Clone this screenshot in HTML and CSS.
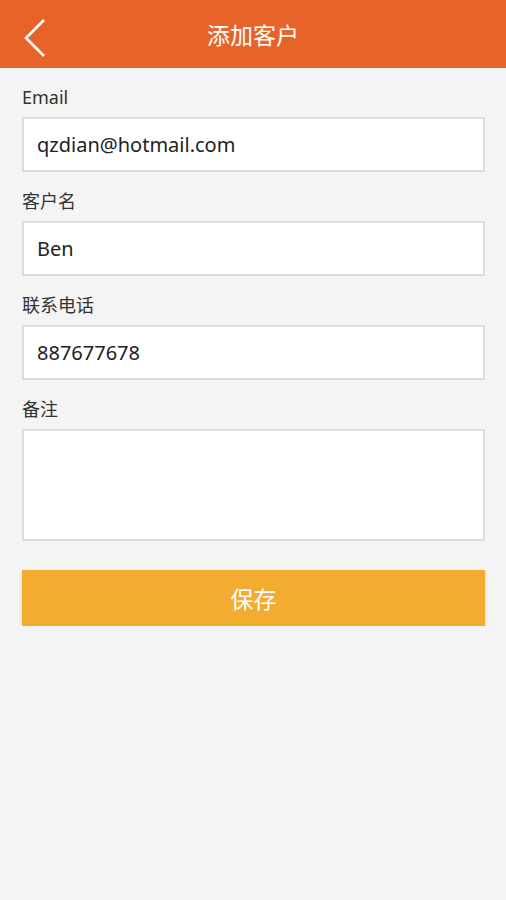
FILE: index.html
```html
<!DOCTYPE html>
<html lang="zh-CN">
<head>
  <meta charset="UTF-8">
  <meta name="viewport" content="width=device-width, initial-scale=1.0">
  <title>添加客户</title>
  <link rel="stylesheet" href="styles.css">
</head>
<body>
  <header class="topbar">
    <a class="back" href="#">
      <svg width="24" height="40" viewBox="0 0 24 40">
        <polyline points="21,2 3,20 21,38" fill="none" stroke="#fff" stroke-width="2.6"/>
      </svg>
    </a>
    <h1>添加客户</h1>
  </header>

  <form class="form">
    <label for="email">Email</label>
    <input type="text" id="email" value="qzdian@hotmail.com">

    <label for="name">客户名</label>
    <input type="text" id="name" value="Ben">

    <label for="phone">联系电话</label>
    <input type="text" id="phone" value="887677678">

    <label for="note">备注</label>
    <textarea id="note"></textarea>

    <button type="button">保存</button>
  </form>
</body>
</html>
```

FILE: styles.css
```css
body {
  margin: 0;
  font-family: "Noto Sans", "Noto Sans CJK SC", sans-serif;
  background: #f4f4f4;
  color: #333;
}

.topbar {
  height: 68px;
  background: #e8632a;
  display: flex;
  align-items: center;
  justify-content: center;
  position: relative;
}

.back {
  position: absolute;
  left: 23px;
  top: 18px;
  display: block;
  line-height: 0;
}

.topbar h1 {
  margin: 0;
  color: #fff;
  font-size: 23px;
  font-weight: normal;
}

.form {
  padding: 0 21px 0 22px;
  display: flex;
  flex-direction: column;
}

label {
  display: block;
  font-size: 18px;
  line-height: 24px;
  margin: 17px 0 8px;
  color: #333;
}

input[type="text"],
textarea {
  box-sizing: border-box;
  width: 100%;
  height: 55px;
  padding: 0 13px;
  font-family: inherit;
  font-size: 20px;
  color: #222;
  background: #fff;
  border: 2px solid #dcdcdc;
  border-radius: 0;
  outline: none;
}

textarea {
  height: 112px;
  resize: none;
}

button {
  margin-top: 29px;
  height: 56px;
  border: none;
  background: #f2ad30;
  color: #fff;
  font-family: inherit;
  font-size: 23px;
  box-shadow: 0 2px 3px rgba(0, 0, 0, 0.15);
}
```
